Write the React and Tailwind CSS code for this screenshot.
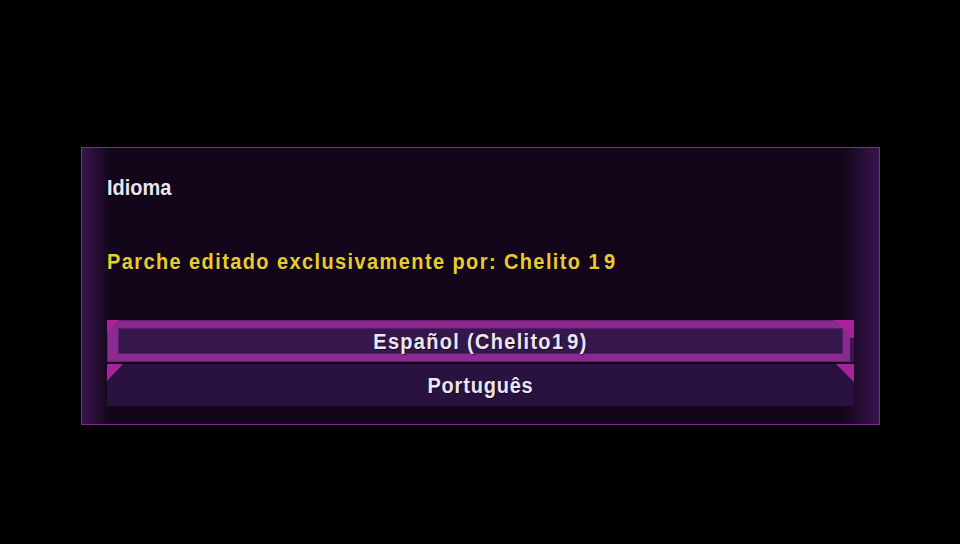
import React from "react";

function Tri({ className, points }) {
  return (
    <svg className={className} width="20" height="18" viewBox="0 0 20 18">
      <polygon points={points} fill="#a8229c" />
    </svg>
  );
}

export default function App() {
  return (
    <div className="w-[960px] h-[544px] bg-black pt-[147px] pl-[81px] font-['Liberation_Sans',Arial,sans-serif] font-bold">
      <div className="relative w-[799px] h-[278px] border border-[#7e2c8e] bg-[linear-gradient(to_right,#3a1450,#13061a_28px,#13061a_calc(100%_-_36px),#3a1450)] px-[25px] pt-[30px]">
        <div className="h-[20px] text-[20px] leading-[20px] text-[#ece6ef] [text-shadow:1px_1px_0_rgba(0,0,0,0.6)]">
          <span className="inline-block scale-y-[1.1] -translate-y-[1px]">Idioma</span>
        </div>
        <div className="mt-[55px] h-[20px] text-[20px] leading-[20px] tracking-[1.4px] text-[#e9cb2c] [text-shadow:1px_1px_0_rgba(0,0,0,0.6)]">
          <span className="inline-block scale-y-[1.1] -translate-y-[2px]">
            Parche editado exclusivamente por: Chelito <span className="mr-[3px]">1</span>9
          </span>
        </div>
        <div className="mt-[47px] flex flex-col gap-[2px]">
          <div className="relative h-[42px] bg-[#8a2a8e] border border-[#6a1f72] px-[10px] py-[7px]">
            <div className="h-full border border-[#5c1b6c] bg-[#35174c] flex items-center justify-center text-[20px] leading-[20px] tracking-[1.3px] text-[#ece6ef] [text-shadow:1px_1px_0_rgba(0,0,0,0.6)]">
              <span className="inline-block scale-y-[1.1]">
                Español (Chelito<span className="mr-[3px]">1</span>9)
              </span>
            </div>
            <Tri className="absolute left-[-1px] top-[-1px]" points="0,0 12,0 0,13" />
            <Tri className="absolute right-[-1px] top-[-1px]" points="0,0 20,0 20,18" />
            <div className="absolute right-[-1px] top-[17px] bottom-[-1px] w-[4px] bg-[#3c1450]" />
          </div>
          <div className="relative h-[42px] bg-[#2a1240] flex items-center justify-center text-[20px] leading-[20px] tracking-[0.8px] text-[#ece6ef] [text-shadow:1px_1px_0_rgba(0,0,0,0.6)]">
            <span className="inline-block scale-y-[1.1]">Português</span>
            <Tri className="absolute left-0 top-0" points="0,0 16,0 0,17" />
            <Tri className="absolute right-0 top-0" points="2,0 20,0 20,18" />
          </div>
        </div>
      </div>
    </div>
  );
}
